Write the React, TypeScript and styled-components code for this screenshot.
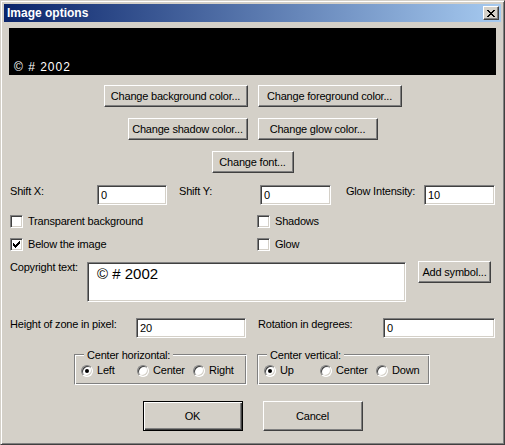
import React from "react";
import styled, { createGlobalStyle } from "styled-components";

const Global = createGlobalStyle`
  html, body { margin: 0; padding: 0; background: #d4d0c8; }
  body { font-family: "Liberation Sans", Arial, sans-serif; font-size: 11px; line-height: 13px; letter-spacing: -0.2px; color: #000; }
  * { box-sizing: border-box; }
`;

const Window = styled.div`
  width: 505px;
  height: 445px;
  background: #d4d0c8;
  border: 1px solid;
  border-color: #d4d0c8 #404040 #404040 #d4d0c8;
  box-shadow: inset 1px 1px #fff, inset -1px -1px #808080;
  padding: 3px;
  display: flex;
  flex-direction: column;
`;

const TitleBar = styled.div`
  height: 18px;
  flex: none;
  display: flex;
  align-items: center;
  justify-content: space-between;
  padding: 0 2px;
  background: linear-gradient(to right, #0a246a, #a6caf0);
`;

const TitleText = styled.span`
  color: #fff;
  font-weight: bold;
  font-size: 12px;
  letter-spacing: 0;
  padding-left: 1px;
`;

const CloseButton = styled.div`
  width: 16px;
  height: 14px;
  background: #d4d0c8;
  border: 1px solid;
  border-color: #fff #404040 #404040 #fff;
  box-shadow: inset -1px -1px #808080;
  display: flex;
  align-items: center;
  justify-content: center;
  padding-right: 1px;
`;

const Body = styled.div`
  display: flex;
  flex-direction: column;
  padding: 6px 5px 0;
`;

const Preview = styled.div`
  height: 47px;
  background: #000;
  color: #fff;
  display: flex;
  align-items: flex-end;
  padding: 0 0 1px 5px;
  font-size: 12px;
  letter-spacing: 1px;
`;

const ButtonStack = styled.div`
  margin-top: 10px;
  display: flex;
  flex-direction: column;
  gap: 11px;
`;

const CenterRow = styled.div<{ $gap?: number; $top?: number }>`
  display: flex;
  justify-content: center;
  gap: ${(p) => p.$gap ?? 10}px;
  margin-top: ${(p) => p.$top ?? 0}px;
`;

const Button = styled.button<{ $w: number; $h?: number; $ml?: number; $default?: boolean }>`
  width: ${(p) => p.$w}px;
  height: ${(p) => p.$h ?? 22}px;
  margin-left: ${(p) => p.$ml ?? 0}px;
  flex: none;
  padding: 0;
  background: #d4d0c8;
  font: inherit;
  letter-spacing: inherit;
  color: #000;
  white-space: nowrap;
  border: 1px solid;
  border-color: ${(p) => (p.$default ? "#000" : "#fff #404040 #404040 #fff")};
  box-shadow: ${(p) =>
    p.$default
      ? "inset 1px 1px #fff, inset -1px -1px #404040, inset -2px -2px #808080"
      : "inset -1px -1px #808080, inset 1px 1px #d4d0c8"};
  outline: none;
`;

const FieldRow = styled.div<{ $top: number }>`
  display: flex;
  align-items: flex-start;
  padding-left: 1px;
  margin-top: ${(p) => p.$top}px;
`;

const Label = styled.span<{ $w: number; $ml?: number }>`
  width: ${(p) => p.$w}px;
  margin-left: ${(p) => p.$ml ?? 0}px;
  flex: none;
  white-space: nowrap;
`;

const Field = styled.div<{ $w: number }>`
  width: ${(p) => p.$w}px;
  height: 20px;
  flex: none;
  background: #fff;
  border: 1px solid;
  border-color: #808080 #fff #fff #808080;
  box-shadow: inset 1px 1px #404040, inset -1px -1px #d4d0c8;
  padding: 0 3px;
  display: flex;
  align-items: center;
`;

const CheckGrid = styled.div`
  margin-top: 10px;
  padding-left: 1px;
  display: grid;
  grid-template-columns: 247px 1fr;
  row-gap: 10px;
`;

const CheckItem = styled.label`
  display: flex;
  align-items: center;
  gap: 5px;
  height: 13px;
`;

const CheckBox = styled.span`
  width: 13px;
  height: 13px;
  flex: none;
  background: #fff;
  border: 1px solid;
  border-color: #808080 #fff #fff #808080;
  box-shadow: inset 1px 1px #404040, inset -1px -1px #d4d0c8;
  display: flex;
  align-items: center;
  justify-content: center;
`;

const CopyRow = styled.div`
  margin-top: 10px;
  padding-left: 1px;
  display: flex;
  align-items: flex-start;
`;

const TextBox = styled.div`
  width: 319px;
  height: 40px;
  margin-top: 1px;
  flex: none;
  background: #fff;
  border: 1px solid;
  border-color: #808080 #fff #fff #808080;
  box-shadow: inset 1px 1px #404040, inset -1px -1px #d4d0c8;
  padding: 2px 0 0 9px;
  font-size: 15px;
  line-height: 17px;
  letter-spacing: 0;
`;

const GroupRow = styled.div`
  margin-top: 16px;
  padding-left: 1px;
  display: flex;
`;

const GroupBox = styled.div<{ $ml: number }>`
  position: relative;
  width: 173px;
  height: 31px;
  margin-left: ${(p) => p.$ml}px;
  border: 1px solid #808080;
  border-right-color: #fff;
  border-bottom-color: #fff;
  box-shadow: inset 1px 1px #fff, inset -1px -1px #808080;
  padding: 9px 0 0 6px;
  display: flex;
`;

const GroupCaption = styled.span`
  position: absolute;
  top: -6px;
  left: 9px;
  padding: 0 3px;
  background: #d4d0c8;
  white-space: nowrap;
`;

const RadioItem = styled.label`
  width: 56px;
  flex: none;
  display: flex;
  align-items: center;
  gap: 4px;
  height: 13px;
`;

const RadioCircle = styled.span`
  width: 12px;
  height: 12px;
  flex: none;
  border-radius: 50%;
  background: #fff;
  border: 1px solid;
  border-color: #808080 #fff #fff #808080;
  box-shadow: inset 1px 1px #404040, inset -1px -1px #d4d0c8;
  display: flex;
  align-items: center;
  justify-content: center;
`;

const RadioDot = styled.span`
  width: 4px;
  height: 4px;
  border-radius: 50%;
  background: #000;
`;

const Check = () => (
  <svg width="7" height="7" viewBox="0 0 7 7" shapeRendering="crispEdges">
    <path
      d="M6 0h1v3h-1v1h-1v1h-1v1h-1v1h-1v-1h-1v-1h-1v-3h1v1h1v1h1v-1h1v-1h1z"
      fill="#000"
    />
  </svg>
);

const CloseGlyph = () => (
  <svg width="8" height="7" viewBox="0 0 8 7" shapeRendering="crispEdges">
    <path
      d="M0 0h2v1h1v1h2v-1h1v-1h2v1h-1v1h-1v1h-1v1h1v1h1v1h1v1h-2v-1h-1v-1h-2v1h-1v1h-2v-1h1v-1h1v-1h1v-1h-1v-1h-1v-1h-1z"
      fill="#000"
    />
  </svg>
);

const Checkbox = ({ label, checked }: { label: string; checked?: boolean }) => (
  <CheckItem>
    <CheckBox>{checked && <Check />}</CheckBox>
    <span>{label}</span>
  </CheckItem>
);

const Radio = ({ label, checked }: { label: string; checked?: boolean }) => (
  <RadioItem>
    <RadioCircle>{checked && <RadioDot />}</RadioCircle>
    <span>{label}</span>
  </RadioItem>
);

export default function App() {
  return (
    <>
      <Global />
      <Window>
        <TitleBar>
          <TitleText>Image options</TitleText>
          <CloseButton>
            <CloseGlyph />
          </CloseButton>
        </TitleBar>
        <Body>
          <Preview>© # 2002</Preview>
          <ButtonStack>
            <CenterRow>
              <Button $w={144}>Change background color...</Button>
              <Button $w={144}>Change foreground color...</Button>
            </CenterRow>
            <CenterRow>
              <Button $w={120}>Change shadow color...</Button>
              <Button $w={120}>Change glow color...</Button>
            </CenterRow>
            <CenterRow>
              <Button $w={82}>Change font...</Button>
            </CenterRow>
          </ButtonStack>
          <FieldRow $top={12}>
            <Label $w={87}>Shift X:</Label>
            <Field $w={70}>0</Field>
            <Label $w={81} $ml={12}>Shift Y:</Label>
            <Field $w={71}>0</Field>
            <Label $w={78} $ml={15}>Glow Intensity:</Label>
            <Field $w={71}>10</Field>
          </FieldRow>
          <CheckGrid>
            <Checkbox label="Transparent background" />
            <Checkbox label="Shadows" />
            <Checkbox label="Below the image" checked />
            <Checkbox label="Glow" />
          </CheckGrid>
          <CopyRow>
            <Label $w={77}>Copyright text:</Label>
            <TextBox>© # 2002</TextBox>
            <Button $w={73} $ml={12}>
              Add symbol...
            </Button>
          </CopyRow>
          <FieldRow $top={16}>
            <Label $w={126}>Height of zone in pixel:</Label>
            <Field $w={110}>20</Field>
            <Label $w={125} $ml={12}>Rotation in degrees:</Label>
            <Field $w={112}>0</Field>
          </FieldRow>
          <GroupRow>
            <GroupBox $ml={64}>
              <GroupCaption>Center horizontal:</GroupCaption>
              <Radio label="Left" checked />
              <Radio label="Center" />
              <Radio label="Right" />
            </GroupBox>
            <GroupBox $ml={10}>
              <GroupCaption>Center vertical:</GroupCaption>
              <Radio label="Up" checked />
              <Radio label="Center" />
              <Radio label="Down" />
            </GroupBox>
          </GroupRow>
          <CenterRow $gap={20} $top={16}>
            <Button $w={100} $h={30} $default>
              OK
            </Button>
            <Button $w={100} $h={30}>
              Cancel
            </Button>
          </CenterRow>
        </Body>
      </Window>
    </>
  );
}
